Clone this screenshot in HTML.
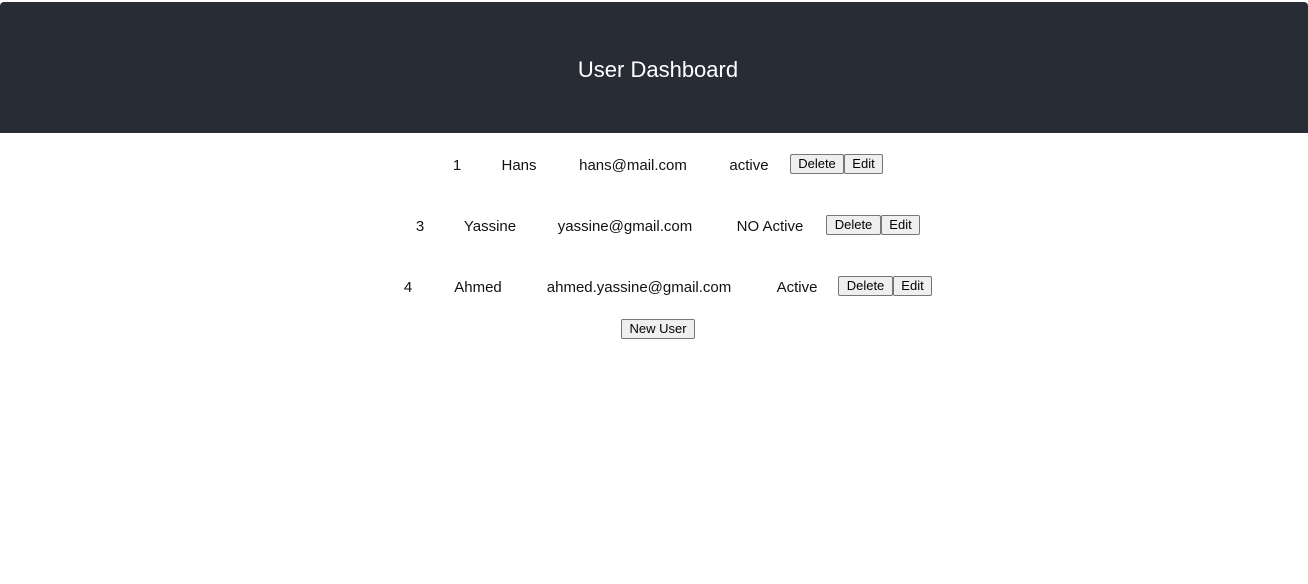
<!DOCTYPE html>
<html><head><style>
body{margin:0;width:1308px;height:584px;background:#fff;font-family:"Liberation Sans",sans-serif;position:relative;overflow:hidden}
.h{position:absolute;left:0;top:2px;width:1308px;height:131px;background:#282c34;border-radius:4px 4px 0 0}
.h div{position:absolute;left:4px;width:100%;top:55px;text-align:center;color:#fff;font-size:22px}
.t{position:absolute;font-size:15px;color:#111;white-space:nowrap;transform:translateX(-50%)}
.b{position:absolute;height:20px;box-sizing:border-box;border:1px solid #767676;background:#efefef;border-radius:2px;font-size:13px;line-height:18px;text-align:center;color:#000}
</style></head><body>
<div class="h"><div>User Dashboard</div></div>

<div class="t" style="left:457px;top:157px">1</div>
<div class="t" style="left:519px;top:157px">Hans</div>
<div class="t" style="left:633px;top:157px">hans@mail.com</div>
<div class="t" style="left:749px;top:157px">active</div>
<div class="b" style="left:790px;top:154px;width:54px">Delete</div>
<div class="b" style="left:844px;top:154px;width:39px">Edit</div>

<div class="t" style="left:420px;top:218px">3</div>
<div class="t" style="left:490px;top:218px">Yassine</div>
<div class="t" style="left:625px;top:218px">yassine@gmail.com</div>
<div class="t" style="left:770px;top:218px">NO Active</div>
<div class="b" style="left:826px;top:215px;width:55px">Delete</div>
<div class="b" style="left:881px;top:215px;width:39px">Edit</div>

<div class="t" style="left:408px;top:279px">4</div>
<div class="t" style="left:478px;top:279px">Ahmed</div>
<div class="t" style="left:639px;top:279px">ahmed.yassine@gmail.com</div>
<div class="t" style="left:797px;top:279px">Active</div>
<div class="b" style="left:838px;top:276px;width:55px">Delete</div>
<div class="b" style="left:893px;top:276px;width:39px">Edit</div>

<div class="b" style="left:621px;top:319px;width:74px">New User</div>
</body></html>
